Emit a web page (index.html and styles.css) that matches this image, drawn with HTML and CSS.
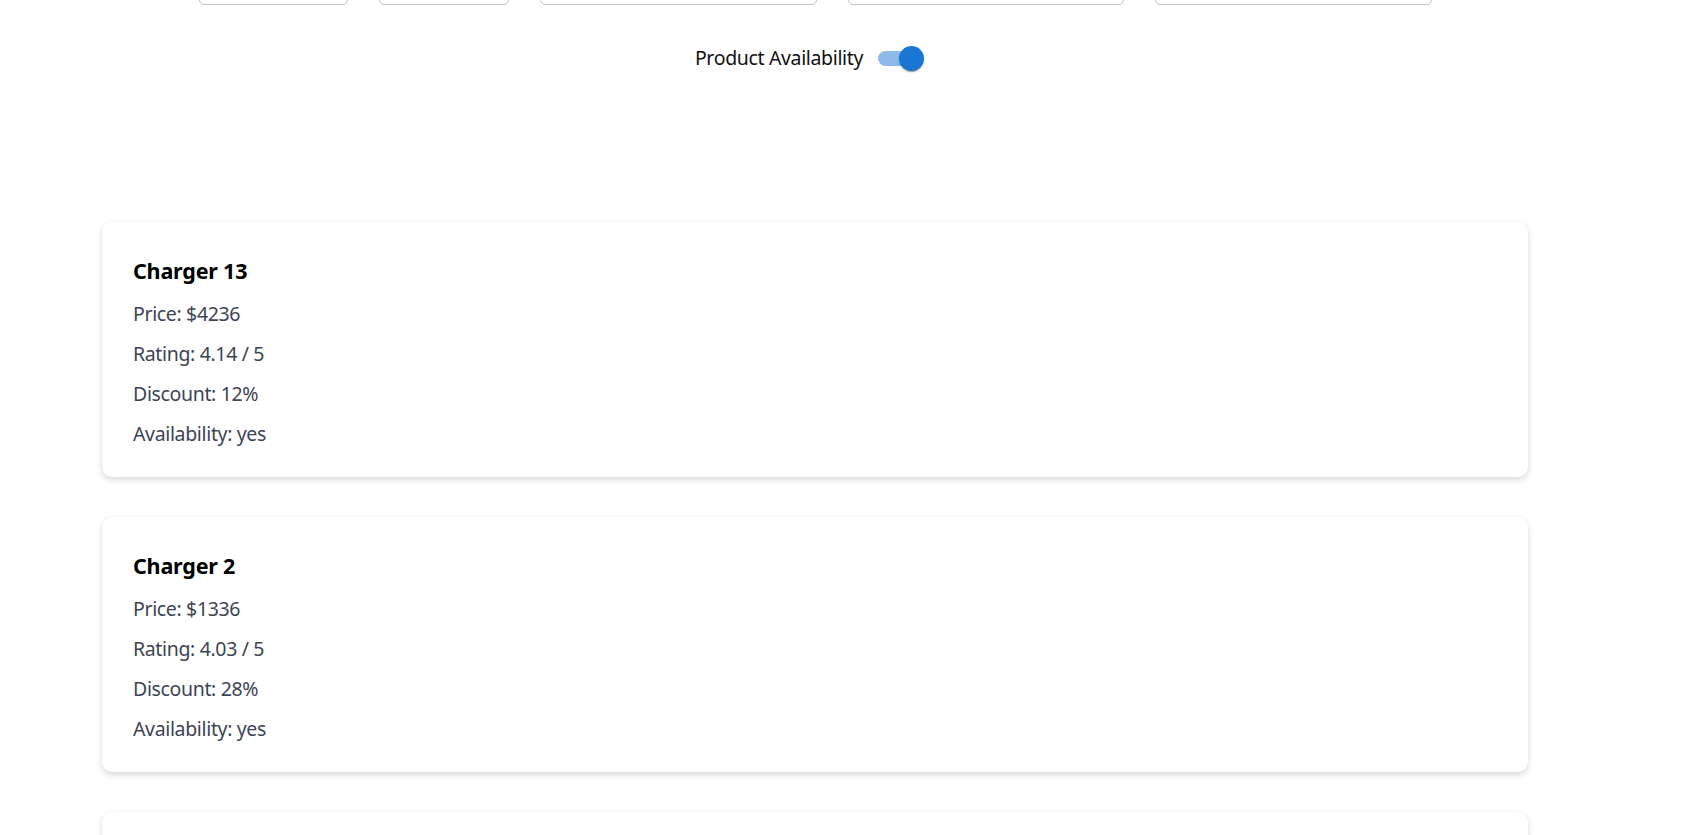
FILE: index.html
```html
<!DOCTYPE html>
<html lang="en">
<head>
<meta charset="utf-8">
<title>Products</title>
<link rel="stylesheet" href="styles.css">
</head>
<body>
<div class="page">
  <div class="filters">
    <div class="field w149"></div>
    <div class="field w130"></div>
    <div class="field w277"></div>
    <div class="field w276"></div>
    <div class="field w277"></div>
  </div>
  <div class="toggle-row">
    <span class="toggle-label">Product Availability</span>
    <span class="switch">
      <span class="track"></span>
      <span class="thumb"></span>
    </span>
  </div>
  <div class="cards">
    <div class="card">
      <h3 class="card-title">Charger 13</h3>
      <p class="card-line">Price: $4236</p>
      <p class="card-line">Rating: 4.14 / 5</p>
      <p class="card-line">Discount: 12%</p>
      <p class="card-line">Availability: yes</p>
    </div>
    <div class="card">
      <h3 class="card-title">Charger 2</h3>
      <p class="card-line">Price: $1336</p>
      <p class="card-line">Rating: 4.03 / 5</p>
      <p class="card-line">Discount: 28%</p>
      <p class="card-line">Availability: yes</p>
    </div>
    <div class="card card-empty"></div>
  </div>
</div>
</body>
</html>
```

FILE: styles.css
```css
html, body {
  margin: 0;
  padding: 0;
  background: #ffffff;
}
body {
  font-family: "Noto Sans", "Open Sans", "Liberation Sans", sans-serif;
  overflow: hidden;
}
.page {
  width: 1630px;
  padding-top: 1px;
}
.filters {
  display: flex;
  justify-content: center;
  gap: 31px;
  margin-top: -66px;
}
.field {
  height: 68px;
  border: 1px solid #c4c4c4;
  border-radius: 5px;
  box-sizing: content-box;
}
.w149 { width: 147px; }
.w130 { width: 128px; }
.w277 { width: 275px; }
.w276 { width: 274px; }
.toggle-row {
  display: flex;
  justify-content: center;
  align-items: center;
  margin-top: 34px;
  height: 38px;
}
.toggle-label {
  font-size: 19.5px;
  letter-spacing: -0.35px;
  line-height: 30px;
  color: #111111;
}
.switch {
  position: relative;
  display: inline-block;
  width: 72px;
  height: 38px;
}
.track {
  position: absolute;
  left: 15px;
  top: 12px;
  width: 42px;
  height: 15px;
  border-radius: 8px;
  background: #8cbbe9;
}
.thumb {
  position: absolute;
  left: 36px;
  top: 7px;
  width: 25px;
  height: 25px;
  border-radius: 50%;
  background: #1976d2;
  box-shadow: 0 2px 1px -1px rgba(0,0,0,0.2), 0 1px 1px 0 rgba(0,0,0,0.14), 0 1px 3px 0 rgba(0,0,0,0.12);
}
.cards {
  display: flex;
  flex-direction: column;
  gap: 40px;
  margin: 145px 102px 0 102px;
}
.card {
  background: #ffffff;
  border-radius: 10px;
  padding: 35px 31px 28px 31px;
  box-shadow: 0 3px 6px rgba(0,0,0,0.14), 0 0 2px rgba(0,0,0,0.05);
}
.card-empty {
  height: 192px;
}
.card-title {
  margin: 0 0 14px 0;
  font-size: 21.5px;
  letter-spacing: -0.2px;
  line-height: 28px;
  font-weight: 700;
  color: #000000;
}
.card-line {
  margin: 0 0 10px 0;
  font-size: 19.5px;
  letter-spacing: -0.35px;
  line-height: 30px;
  color: #3d4454;
}
.card-line:last-child {
  margin-bottom: 0;
}
```
